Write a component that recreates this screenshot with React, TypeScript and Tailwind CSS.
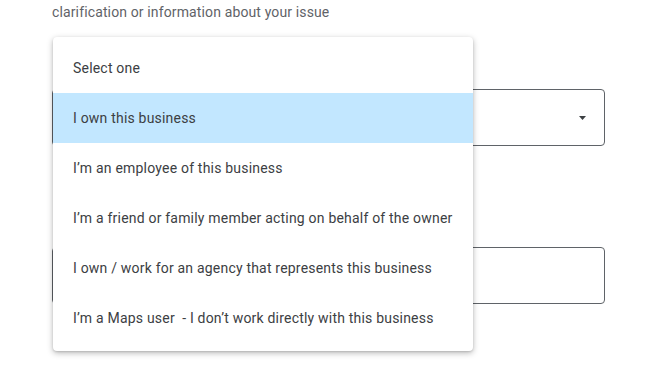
import { useState } from 'react'

const options = [
  'Select one',
  'I own this business',
  'I’m an employee of this business',
  'I’m a friend or family member acting on behalf of the owner',
  'I own / work for an agency that represents this business',
  'I’m a Maps user  - I don’t work directly with this business',
]

export default function App() {
  const [selected] = useState(1)

  return (
    <div className="relative h-[365px] w-[647px] overflow-hidden bg-white font-['Roboto',sans-serif] text-[#3c4043]">
      {/* form behind the open menu */}
      <div className="ml-[52px] w-[553px]">
        <p className="pt-[3px] text-[14px] leading-[18px] tracking-[0.13px] text-[#5f6368]">
          clarification or information about your issue
        </p>

        <div className="mt-[68px] flex h-[57px] items-center justify-end rounded-[4px] border border-[#5f6368] pr-[18px]">
          <svg width="7" height="4" viewBox="0 0 7 4">
            <path d="M0 0h7L3.5 4z" fill="#3c4043" />
          </svg>
        </div>

        <div className="mt-[101px] h-[57px] rounded-[4px] border border-[#5f6368]" />
      </div>

      {/* open dropdown */}
      <ul className="absolute left-[53px] top-[37px] w-[420px] rounded-[4px] bg-white pt-[6px] pb-[8px] shadow-[0_2px_6px_rgba(0,0,0,0.28),0_1px_2px_rgba(0,0,0,0.12)]">
        {options.map((o, i) => (
          <li
            key={o}
            className={`flex h-[50px] items-center whitespace-pre pl-[20px] text-[14px] tracking-[0.2px] text-[#3c4043] ${
              i === selected ? 'bg-[#c2e7ff]' : ''
            }`}
          >
            {o}
          </li>
        ))}
      </ul>
    </div>
  )
}
